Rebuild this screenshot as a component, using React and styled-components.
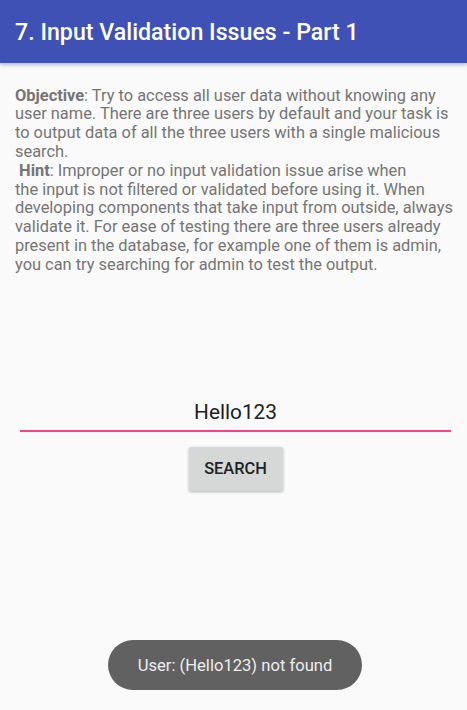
import styled, { createGlobalStyle } from "styled-components";

const GlobalStyle = createGlobalStyle`
    html, body {
        margin: 0;
        padding: 0;
        background: #fafafa;
        font-family: Roboto, "Noto Sans", sans-serif;
    }
`;

export default function App() {
    return (
        <>
            <GlobalStyle />
            <Screen>
                <TopBar>
                    <Title>7. Input Validation Issues - Part 1</Title>
                </TopBar>
                <Content>
                    <Description>
                        <strong>Objective</strong>: Try to access all user data without knowing any
                        <br />
                        user name. There are three users by default and your task is
                        <br />
                        to output data of all the three users with a single malicious
                        <br />
                        search.
                        <br />
                        &nbsp;<strong>Hint</strong>: Improper or no input validation issue arise when
                        <br />
                        the input is not filtered or validated before using it. When
                        <br />
                        developing components that take input from outside, always
                        <br />
                        validate it. For ease of testing there are three users already
                        <br />
                        present in the database, for example one of them is admin,
                        <br />
                        you can try searching for admin to test the output.
                    </Description>
                    <Form>
                        <SearchInput defaultValue="Hello123" />
                        <SearchButton>SEARCH</SearchButton>
                    </Form>
                </Content>
                <Toast>User: (Hello123) not found</Toast>
            </Screen>
        </>
    );
}

const Screen = styled.div`
    width: 467px;
    height: 710px;
    display: flex;
    flex-direction: column;
    align-items: stretch;
    background: #fafafa;
    overflow: hidden;
`;

const TopBar = styled.header`
    height: 63px;
    flex-shrink: 0;
    background: #3f51b5;
    display: flex;
    align-items: center;
    padding: 0 15px;
    box-shadow: 0 2px 4px rgba(0, 0, 0, 0.25);
`;

const Title = styled.h1`
    margin: 0;
    color: #ffffff;
    font-size: 23.2px;
    font-weight: 500;
`;

const Content = styled.main`
    flex: 1;
    display: flex;
    flex-direction: column;
    padding: 23.6px 15px 0 15px;
`;

const Description = styled.p`
    margin: 0;
    color: #757575;
    font-size: 16.4px;
    line-height: 18.8px;
    white-space: nowrap;
    strong {
        font-weight: 700;
    }
`;

const Form = styled.div`
    display: flex;
    flex-direction: column;
    align-items: center;
    margin-top: 120.4px;
    padding: 0 1px 0 5px;
`;

const SearchInput = styled.input`
    width: 100%;
    height: 37px;
    box-sizing: border-box;
    border: none;
    border-bottom: 2px solid #ff4081;
    background: transparent;
    outline: none;
    text-align: center;
    font-family: Roboto, "Noto Sans", sans-serif;
    font-size: 20.8px;
    color: #212121;
    padding: 0;
`;

const SearchButton = styled.button`
    margin-top: 15px;
    width: 94px;
    height: 44px;
    border: none;
    border-radius: 2px;
    background: #d6d7d7;
    color: #212121;
    font-family: Roboto, "Noto Sans", sans-serif;
    font-size: 16.4px;
    font-weight: 500;
    box-shadow: 0 1px 3px rgba(0, 0, 0, 0.3);
`;

const Toast = styled.div`
    position: absolute;
    left: 108px;
    top: 640px;
    width: 254px;
    height: 50px;
    border-radius: 25px;
    background: #616161;
    color: #eeeeee;
    font-size: 16.6px;
    display: flex;
    align-items: center;
    justify-content: center;
`;
